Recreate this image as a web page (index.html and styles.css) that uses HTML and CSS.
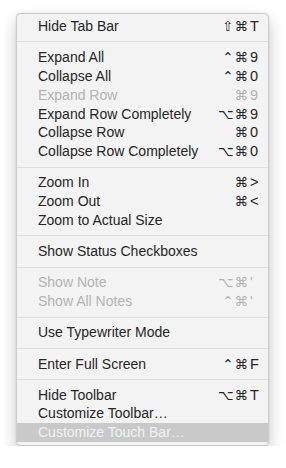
FILE: index.html
```html
<!DOCTYPE html>
<html>
<head>
<meta charset="utf-8">
<link rel="stylesheet" href="styles.css">
</head>
<body>
<div class="menu">
  <div class="item"><span class="label">Hide Tab Bar</span><span class="sc"><span class="mods">⇧⌘</span><span class="key">T</span></span></div>
  <div class="sep"></div>
  <div class="item"><span class="label">Expand All</span><span class="sc"><span class="mods">⌃⌘</span><span class="key">9</span></span></div>
  <div class="item"><span class="label">Collapse All</span><span class="sc"><span class="mods">⌃⌘</span><span class="key">0</span></span></div>
  <div class="item disabled"><span class="label">Expand Row</span><span class="sc"><span class="mods">⌘</span><span class="key">9</span></span></div>
  <div class="item"><span class="label">Expand Row Completely</span><span class="sc"><span class="mods">⌥⌘</span><span class="key">9</span></span></div>
  <div class="item"><span class="label">Collapse Row</span><span class="sc"><span class="mods">⌘</span><span class="key">0</span></span></div>
  <div class="item"><span class="label">Collapse Row Completely</span><span class="sc"><span class="mods">⌥⌘</span><span class="key">0</span></span></div>
  <div class="sep"></div>
  <div class="item"><span class="label">Zoom In</span><span class="sc"><span class="mods">⌘</span><span class="key">&gt;</span></span></div>
  <div class="item"><span class="label">Zoom Out</span><span class="sc"><span class="mods">⌘</span><span class="key">&lt;</span></span></div>
  <div class="item"><span class="label">Zoom to Actual Size</span></div>
  <div class="sep"></div>
  <div class="item"><span class="label">Show Status Checkboxes</span></div>
  <div class="sep"></div>
  <div class="item disabled"><span class="label">Show Note</span><span class="sc"><span class="mods">⌥⌘</span><span class="key">'</span></span></div>
  <div class="item disabled"><span class="label">Show All Notes</span><span class="sc"><span class="mods">⌃⌘</span><span class="key">'</span></span></div>
  <div class="sep"></div>
  <div class="item"><span class="label">Use Typewriter Mode</span></div>
  <div class="sep"></div>
  <div class="item"><span class="label">Enter Full Screen</span><span class="sc"><span class="mods">⌃⌘</span><span class="key">F</span></span></div>
  <div class="sep"></div>
  <div class="item"><span class="label">Hide Toolbar</span><span class="sc"><span class="mods">⌥⌘</span><span class="key">T</span></span></div>
  <div class="item"><span class="label">Customize Toolbar…</span></div>
  <div class="item highlighted"><span class="label">Customize Touch Bar…</span></div>
</div>
</body>
</html>
```
FILE: styles.css
```css
html, body {
  margin: 0;
  padding: 0;
  background: #ffffff;
}
body {
  padding: 13px 0 0 16px;
  font-family: "Liberation Sans", Arial, sans-serif;
}
.menu {
  box-sizing: border-box;
  width: 253px;
  padding: 3px 0 3px 0;
  background: #f3f3f3;
  border: 1px solid rgba(0, 0, 0, 0.16);
  border-radius: 5px;
  box-shadow: 0 7px 16px rgba(0, 0, 0, 0.22), 0 0 3px rgba(0, 0, 0, 0.08);
}
.item {
  display: flex;
  justify-content: space-between;
  align-items: baseline;
  height: 18.8px;
  line-height: 18.8px;
  padding: 0 8px 0 21px;
  font-size: 14px;
  color: #262626;
  white-space: nowrap;
}
.item.disabled {
  color: #b4b4b4;
}
.item.highlighted {
  background: #c9c9c9;
  color: #eef2f7;
}
.sc {
  display: flex;
  align-items: baseline;
}
.mods {
  font-family: "DejaVu Sans", sans-serif;
  font-size: 13.5px;
  text-align: right;
  letter-spacing: 1px;
}
.key {
  display: inline-block;
  width: 10px;
  padding-left: 1px;
  font-size: 14.5px;
  text-align: left;
}
.sep {
  height: 12.4px;
  display: flex;
  align-items: center;
}
.sep::before {
  content: "";
  display: block;
  width: 100%;
  height: 1px;
  background: #dfdfdf;
}
```
